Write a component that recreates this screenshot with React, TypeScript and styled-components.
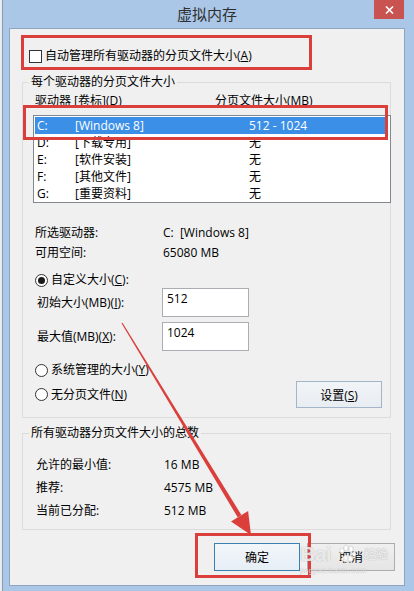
import React from "react";
import styled, { createGlobalStyle } from "styled-components";

const Global = createGlobalStyle`
  html, body { margin: 0; padding: 0; background: #e6e9ed; }
  body {
    font-family: "Open Sans", "Noto Sans CJK SC", sans-serif;
    font-size: 12px;
    color: #000;
  }
  #root { width: 414px; height: 591px; }
`;

const Stage = styled.div`
  position: relative;
  width: 414px;
  height: 591px;
  overflow: hidden;
  background: #e9ecef;
`;

const Win = styled.div`
  margin-left: 2px;
  width: 412px;
  height: 591px;
  box-sizing: border-box;
  border-left: 1px solid #8b9bb0;
  background: #aac7e8;
  padding: 0 9px 5px 6px;
  display: flex;
  flex-direction: column;
`;

const TitleBar = styled.div`
  height: 28px;
  flex: none;
  display: grid;
  grid-template-columns: 1fr auto 1fr;
`;

const Title = styled.div`
  grid-column: 2;
  align-self: center;
  font-family: "Noto Sans CJK SC", sans-serif;
  font-size: 15px;
  line-height: 20px;
  color: #2f2f2f;
`;

const CloseBtn = styled.div`
  grid-column: 3;
  justify-self: end;
  align-self: start;
  margin-right: 1px;
  width: 30px;
  height: 19px;
  background: #c85350;
  display: flex;
  align-items: center;
  justify-content: center;
`;

const Panel = styled.div`
  flex: 1;
  border: 1px solid #8ea5bf;
  background: #f0f0f0;
  padding: 0 9px 0 12px;
  display: flex;
  flex-direction: column;
`;

const CheckRow = styled.div`
  margin-top: 19px;
  height: 16px;
  padding-left: 7px;
  display: flex;
  align-items: center;
  gap: 3px;
  line-height: 16px;
`;

const CheckBox = styled.span`
  width: 13px;
  height: 13px;
  box-sizing: border-box;
  border: 1px solid #333;
  background: #fff;
  flex: none;
`;

const Group = styled.fieldset<{ $top: number; $pb: number }>`
  margin: ${(p) => p.$top}px 4px 0 0;
  padding: 0 8px ${(p) => p.$pb}px 10px;
  border: 1px solid #dcdcdc;
  min-width: 0;
`;

const Legend = styled.legend`
  margin-left: -4px;
  padding: 0 2px;
  line-height: 16px;
  color: #000;
`;

const HeaderRow = styled.div`
  margin-top: 3px;
  padding-left: 2px;
  line-height: 16px;
  display: grid;
  grid-template-columns: 180px 1fr;
  color: #000;
`;

const List = styled.div`
  margin: 6px -9px 0 0;
  border: 1px solid #828790;
  background: #fff;
  padding: 1px 2px 0 1px;
`;

const ListRow = styled.div<{ $sel?: boolean }>`
  height: 17px;
  line-height: 17px;
  padding-left: 2px;
  display: grid;
  grid-template-columns: 38px 174px 1fr;
  background: ${(p) => (p.$sel ? "#3b8fe6" : "transparent")};
  color: ${(p) => (p.$sel ? "#fff" : "#000")};
`;

const InfoGrid = styled.div<{ $top: number; $rowH: number; $pl: number }>`
  margin-top: ${(p) => p.$top}px;
  padding-left: ${(p) => p.$pl}px;
  display: grid;
  grid-template-columns: 128px 1fr;
  grid-auto-rows: ${(p) => p.$rowH}px;
  align-items: center;
  line-height: 16px;
`;

const RadioRow = styled.div<{ $top: number }>`
  margin-top: ${(p) => p.$top}px;
  height: 16px;
  padding-left: 2px;
  display: flex;
  align-items: center;
  gap: 3px;
  line-height: 16px;
`;

const Radio = styled.span<{ $on?: boolean }>`
  width: 13px;
  height: 13px;
  box-sizing: border-box;
  border: 1px solid #333;
  border-radius: 50%;
  background: #fff;
  flex: none;
  display: flex;
  align-items: center;
  justify-content: center;
  &::after {
    content: "";
    width: 7px;
    height: 7px;
    border-radius: 50%;
    background: ${(p) => (p.$on ? "#1a1a1a" : "transparent")};
  }
`;

const InputRow = styled.div<{ $top: number }>`
  margin-top: ${(p) => p.$top}px;
  padding-left: 4px;
  display: grid;
  grid-template-columns: 125px 87px;
  align-items: center;
  line-height: 16px;
`;

const InputBox = styled.div`
  height: 29px;
  box-sizing: border-box;
  border: 1px solid #abadb3;
  background: #fff;
  padding: 2px 4px;
  line-height: 16px;
`;

const LastRow = styled.div`
  margin-top: 3px;
  height: 27px;
  display: flex;
  align-items: center;
  justify-content: space-between;
`;

const Button = styled.div<{ $w: number; $h: number; $kind?: "default" | "plain" | "blue" }>`
  width: ${(p) => p.$w}px;
  height: ${(p) => p.$h}px;
  box-sizing: border-box;
  display: flex;
  align-items: center;
  justify-content: center;
  border: 1px solid
    ${(p) => (p.$kind === "default" ? "#3c7fb1" : p.$kind === "blue" ? "#a3b5c9" : "#adadad")};
  background: ${(p) =>
    p.$kind === "default"
      ? "linear-gradient(#f2f6fa, #e6eef6)"
      : p.$kind === "blue"
      ? "linear-gradient(#f1f4f7, #e8edf2)"
      : "linear-gradient(#f0f0f0, #e5e5e5)"};
  color: #000;
`;

const ButtonRow = styled.div`
  margin-top: 13px;
  display: flex;
  justify-content: flex-end;
  gap: 7px;
`;

const Annot = styled.div<{ $x: number; $y: number; $w: number; $h: number }>`
  position: absolute;
  left: ${(p) => p.$x}px;
  top: ${(p) => p.$y}px;
  width: ${(p) => p.$w}px;
  height: ${(p) => p.$h}px;
  box-sizing: border-box;
  border: 3px solid #db3f3b;
  pointer-events: none;
`;

const Overlay = styled.svg`
  position: absolute;
  left: 0;
  top: 0;
  pointer-events: none;
`;

const Watermark = styled.div`
  position: absolute;
  left: 300px;
  top: 542px;
  color: rgba(255, 255, 255, 0.8);
  text-shadow: 0 0 1px rgba(90, 90, 90, 0.55);
  font-family: "Liberation Sans", "Noto Sans CJK SC", sans-serif;
  pointer-events: none;
`;

const WmTop = styled.div`
  display: flex;
  align-items: center;
  line-height: 24px;
`;

const WmBai = styled.span`
  display: inline-block;
  width: 37px;
  font-size: 21px;
  font-weight: bold;
  letter-spacing: -0.5px;
`;

const WmJy = styled.span`
  margin-left: 7px;
  font-family: "Noto Sans CJK SC", sans-serif;
  font-size: 12px;
  font-weight: bold;
`;

const WmUrl = styled.div`
  font-size: 7px;
  line-height: 9px;
  letter-spacing: 0.6px;
`;

const drives = [
  { d: "C:", l: "[Windows 8]", s: "512 - 1024", sel: true },
  { d: "D:", l: "[下载专用]", s: "无" },
  { d: "E:", l: "[软件安装]", s: "无" },
  { d: "F:", l: "[其他文件]", s: "无" },
  { d: "G:", l: "[重要资料]", s: "无" },
];

function arrowPoints() {
  const S = [122, 323];
  const T = [251, 535];
  const dx = T[0] - S[0];
  const dy = T[1] - S[1];
  const len = Math.hypot(dx, dy);
  const u = [dx / len, dy / len];
  const n = [u[1], -u[0]];
  const headL = 22;
  const headW = 10;
  const B = [T[0] - headL * u[0], T[1] - headL * u[1]];
  const p = (pt: number[], k: number) => `${pt[0] + k * n[0]},${pt[1] + k * n[1]}`;
  const shaft = [p(S, 0.6), p(B, 2.2), p(B, -2.2), p(S, -0.6)].join(" ");
  const head = [`${T[0]},${T[1]}`, p(B, headW), p(B, -headW)].join(" ");
  return { shaft, head };
}

export default function App() {
  const { shaft, head } = arrowPoints();
  return (
    <Stage>
      <Global />
      <Win>
        <TitleBar>
          <Title>虚拟内存</Title>
          <CloseBtn>
            <svg width="9" height="8" viewBox="0 0 9 8">
              <path d="M1 0.5 L8 7.5 M8 0.5 L1 7.5" stroke="#fff" strokeWidth="1.6" />
            </svg>
          </CloseBtn>
        </TitleBar>
        <Panel>
          <CheckRow>
            <CheckBox />
            <span>
              自动管理所有驱动器的分页文件大小(<u>A</u>)
            </span>
          </CheckRow>

          <Group $top={10} $pb={9}>
            <Legend>每个驱动器的分页文件大小</Legend>
            <HeaderRow>
              <span>
                驱动器 [卷标](<u>D</u>)
              </span>
              <span>分页文件大小(MB)</span>
            </HeaderRow>
            <List>
              {drives.map((r) => (
                <ListRow key={r.d} $sel={r.sel}>
                  <span>{r.d}</span>
                  <span>{r.l}</span>
                  <span>{r.s}</span>
                </ListRow>
              ))}
            </List>
            <InfoGrid $top={20} $rowH={20} $pl={2}>
              <span>所选驱动器:</span>
              <span>C:&nbsp;&nbsp;[Windows 8]</span>
              <span>可用空间:</span>
              <span>65080 MB</span>
            </InfoGrid>
            <RadioRow $top={9}>
              <Radio $on />
              <span>
                自定义大小(<u>C</u>):
              </span>
            </RadioRow>
            <InputRow $top={0}>
              <span>
                初始大小(MB)(<u>I</u>):
              </span>
              <InputBox>512</InputBox>
            </InputRow>
            <InputRow $top={5}>
              <span>
                最大值(MB)(<u>X</u>):
              </span>
              <InputBox>1024</InputBox>
            </InputRow>
            <RadioRow $top={11}>
              <Radio />
              <span>
                系统管理的大小(<u>Y</u>)
              </span>
            </RadioRow>
            <LastRow>
              <RadioRow $top={0}>
                <Radio />
                <span>
                  无分页文件(<u>N</u>)
                </span>
              </RadioRow>
              <Button $w={86} $h={27} $kind="blue">
                <span>
                  设置(<u>S</u>)
                </span>
              </Button>
            </LastRow>
          </Group>

          <Group $top={7} $pb={7}>
            <Legend>所有驱动器分页文件大小的总数</Legend>
            <InfoGrid $top={12} $rowH={23} $pl={3}>
              <span>允许的最小值:</span>
              <span>16 MB</span>
              <span>推荐:</span>
              <span>4575 MB</span>
              <span>当前已分配:</span>
              <span>512 MB</span>
            </InfoGrid>
          </Group>

          <ButtonRow>
            <Button $w={86} $h={28} $kind="default">
              确定
            </Button>
            <Button $w={88} $h={28}>
              取消
            </Button>
          </ButtonRow>
        </Panel>
      </Win>

      <Annot $x={21} $y={35} $w={291} $h={35} />
      <Annot $x={23} $y={105} $w={365} $h={35} />
      <Annot $x={195} $y={533} $w={116} $h={45} />

      <Overlay width="414" height="591" viewBox="0 0 414 591">
        <polygon points={shaft} fill="#db3f3b" />
        <polygon points={head} fill="#db3f3b" />
      </Overlay>

      <Watermark>
        <WmTop>
          <WmBai>Bai</WmBai>
          <svg width="20" height="20" viewBox="0 0 20 20">
            <g fill="rgba(255,255,255,0.85)" stroke="rgba(120,120,120,0.4)" strokeWidth="0.6">
              <ellipse cx="5" cy="7" rx="2.2" ry="3" />
              <ellipse cx="9" cy="4" rx="2.2" ry="3" />
              <ellipse cx="14" cy="5" rx="2.2" ry="3" />
              <ellipse cx="17" cy="10" rx="2" ry="2.6" />
              <path d="M4 16 C5 10, 14 9, 16 15 C16 19, 6 19, 4 16 Z" />
            </g>
          </svg>
          <WmJy>经验</WmJy>
        </WmTop>
        <WmUrl>jingyan.baidu.com</WmUrl>
      </Watermark>
    </Stage>
  );
}
